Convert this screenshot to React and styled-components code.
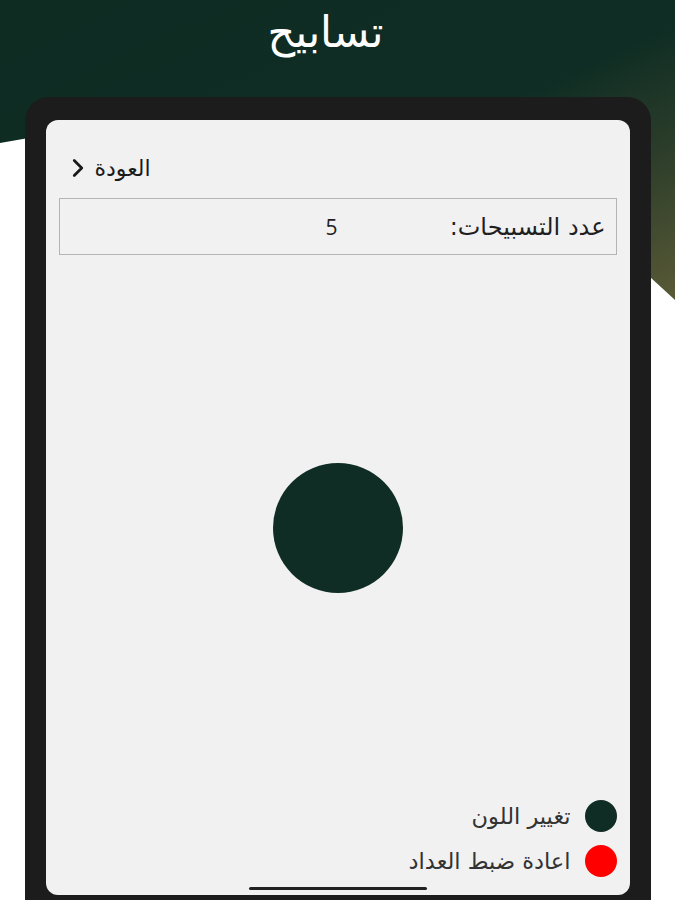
import React from "react";
import styled, { createGlobalStyle } from "styled-components";
import { ChevronRight } from "lucide-react";

const GlobalStyle = createGlobalStyle`
  html, body {
    margin: 0;
    padding: 0;
    background: #ffffff;
  }
  body {
    font-family: "DejaVu Sans", "Noto Sans", sans-serif;
  }
`;

const Page = styled.div`
  position: relative;
  width: 675px;
  height: 900px;
  overflow: hidden;
  background: #ffffff;
  display: flex;
  flex-direction: column;
  align-items: center;
`;

const Backdrop = styled.div`
  position: absolute;
  top: 0;
  left: 0;
  right: 0;
  height: 300px;
  background: linear-gradient(155deg, #0e2c22 0%, #0f2d24 55%, #2c3d2a 75%, #5a5a36 100%);
  clip-path: polygon(0 0, 100% 0, 100% 300px, 650px 277px, 40px 136px, 0 143px);
`;

const Title = styled.h1`
  position: relative;
  flex-shrink: 0;
  margin: 0 24px 0 0;
  padding-top: 6px;
  height: 97px;
  box-sizing: border-box;
  color: #ffffff;
  font-size: 43px;
  line-height: 52px;
  font-weight: normal;
  direction: rtl;
`;

const Device = styled.div`
  position: relative;
  flex-shrink: 0;
  box-sizing: border-box;
  width: 626px;
  height: 830px;
  padding: 23px 21px 0 21px;
  background: #1c1c1c;
  border-radius: 24px;
  display: flex;
  align-items: flex-start;
`;

const Screen = styled.div`
  flex: 1;
  height: 775px;
  box-sizing: border-box;
  background: #f1f1f1;
  border-radius: 12px;
  direction: rtl;
  display: flex;
  flex-direction: column;
  padding: 32px 13px 5px 13px;
`;

const BackRow = styled.div`
  display: flex;
  justify-content: flex-end;
  padding-left: 4px;
`;

const BackLink = styled.a`
  display: flex;
  align-items: center;
  gap: 2px;
  color: #1a1a1a;
  font-size: 22px;
  text-decoration: none;
  height: 32px;
`;

const CountBox = styled.div`
  margin-top: 14px;
  height: 57px;
  box-sizing: border-box;
  border: 1px solid #b4b4b4;
  display: grid;
  grid-template-columns: 1fr auto 1fr;
  align-items: center;
  padding: 0 10px;
  color: #1f1f1f;
  font-size: 24px;
`;

const CountLabel = styled.span`
  justify-self: start;
`;

const CountValue = styled.span`
  font-family: "Open Sans", sans-serif;
  font-size: 21px;
  margin-right: 12px;
`;

const Stage = styled.div`
  flex: 1;
  display: flex;
  align-items: center;
  justify-content: center;
`;

const Bead = styled.div`
  width: 130px;
  height: 130px;
  border-radius: 50%;
  background: #0f2d24;
`;

const Actions = styled.div`
  display: flex;
  flex-direction: column;
  gap: 13px;
`;

const Action = styled.div`
  display: flex;
  align-items: center;
  gap: 14px;
  color: #333333;
  font-size: 22.5px;
  height: 32px;
`;

const Dot = styled.span`
  width: 32px;
  height: 32px;
  border-radius: 50%;
  background: ${p => p.color};
  flex-shrink: 0;
`;

const HomeBar = styled.div`
  align-self: center;
  width: 178px;
  height: 3px;
  background: #222222;
  border-radius: 2px;
  margin-top: 10px;
`;

export default function App() {
  return (
    <Page>
      <GlobalStyle />
      <Backdrop />
      <Title>تسابيح</Title>
      <Device>
        <Screen>
          <BackRow>
            <BackLink href="#">
              العودة
              <ChevronRight size={30} strokeWidth={2.2} />
            </BackLink>
          </BackRow>
          <CountBox>
            <CountLabel>عدد التسبيحات:</CountLabel>
            <CountValue>5</CountValue>
            <span />
          </CountBox>
          <Stage>
            <Bead />
          </Stage>
          <Actions>
            <Action>
              <Dot color="#0f2d24" />
              تغيير اللون
            </Action>
            <Action>
              <Dot color="#ff0000" />
              اعادة ضبط العداد
            </Action>
          </Actions>
          <HomeBar />
        </Screen>
      </Device>
    </Page>
  );
}
